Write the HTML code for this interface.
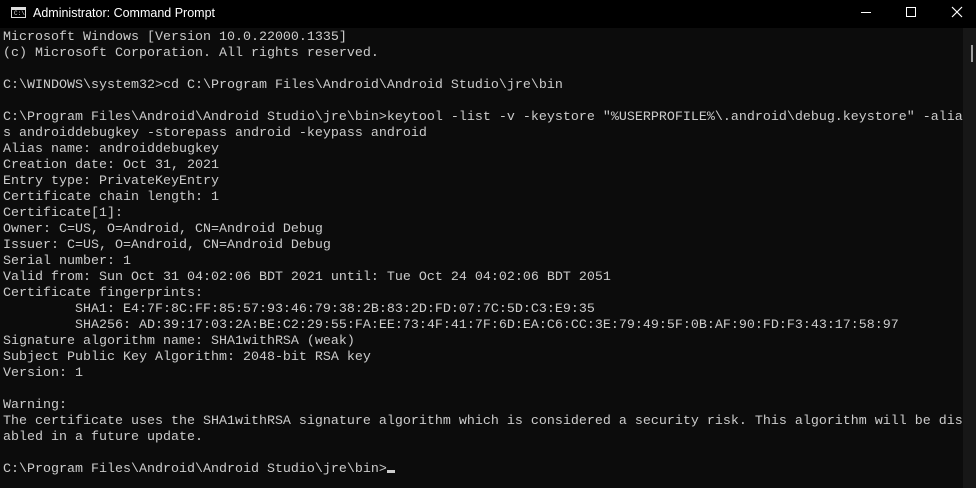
<!DOCTYPE html>
<html><head><style>
html,body{margin:0;padding:0;width:976px;height:488px;overflow:hidden;background:#0c0c0c}
#title{position:absolute;left:0;top:0;width:976px;height:28px;background:#000;color:#fff;font:12px "Liberation Sans",sans-serif}
#title .t{position:absolute;left:33px;top:6px;font-size:12.5px}
#icon{position:absolute;left:11px;top:7px;width:15px;height:11px;border:1px solid #ddd;background:#000;box-sizing:border-box}
#icon:before{content:"";position:absolute;left:0;right:0;top:0;height:2px;background:#ddd}
#icon span{position:absolute;left:2px;top:2px;font:6px "Liberation Mono",monospace;color:#ddd}
#min{position:absolute;left:861px;top:12px;width:10px;height:1px;background:#fff}
#max{position:absolute;left:906px;top:7px;width:10px;height:10px;border:1px solid #fff;box-sizing:border-box}
#close{position:absolute;left:951px;top:6px}
#content{position:absolute;left:3px;top:30px;width:960px;color:#cccccc;font:13.33px/16px "Liberation Mono",monospace;white-space:pre}
#sb{position:absolute;left:963px;top:28px;width:13px;height:460px;background:#171717}
#thumb{position:absolute;left:971px;top:45px;width:2px;height:17px;background:#9e9e9e}
.cur{display:inline-block;width:8px;height:3px;background:#ccc;vertical-align:-1px}
</style></head><body>
<div id="title"><div id="icon"><span>C:\</span></div><div class="t">Administrator: Command Prompt</div>
<div id="min"></div><div id="max"></div>
<svg id="close" width="12" height="12"><path d="M1 1L11 11M11 1L1 11" stroke="#fff" stroke-width="1.2"/></svg></div>
<div id="content">Microsoft Windows [Version 10.0.22000.1335]
(c) Microsoft Corporation. All rights reserved.

C:\WINDOWS\system32>cd C:\Program Files\Android\Android Studio\jre\bin

C:\Program Files\Android\Android Studio\jre\bin>keytool -list -v -keystore "%USERPROFILE%\.android\debug.keystore" -alia
s androiddebugkey -storepass android -keypass android
Alias name: androiddebugkey
Creation date: Oct 31, 2021
Entry type: PrivateKeyEntry
Certificate chain length: 1
Certificate[1]:
Owner: C=US, O=Android, CN=Android Debug
Issuer: C=US, O=Android, CN=Android Debug
Serial number: 1
Valid from: Sun Oct 31 04:02:06 BDT 2021 until: Tue Oct 24 04:02:06 BDT 2051
Certificate fingerprints:
         SHA1: E4:7F:8C:FF:85:57:93:46:79:38:2B:83:2D:FD:07:7C:5D:C3:E9:35
         SHA256: AD:39:17:03:2A:BE:C2:29:55:FA:EE:73:4F:41:7F:6D:EA:C6:CC:3E:79:49:5F:0B:AF:90:FD:F3:43:17:58:97
Signature algorithm name: SHA1withRSA (weak)
Subject Public Key Algorithm: 2048-bit RSA key
Version: 1

Warning:
The certificate uses the SHA1withRSA signature algorithm which is considered a security risk. This algorithm will be dis
abled in a future update.

C:\Program Files\Android\Android Studio\jre\bin&gt;<span class="cur"></span></div>
<div id="sb"></div><div id="thumb"></div>
</body></html>
